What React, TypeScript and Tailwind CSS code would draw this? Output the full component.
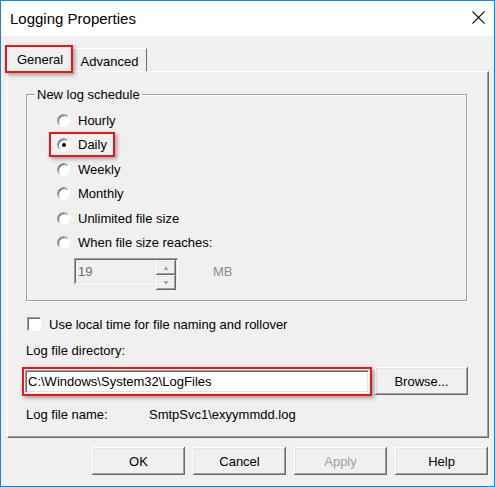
const raised =
  "shadow-[inset_-1px_-1px_#696969,inset_1px_1px_#ffffff,inset_-2px_-2px_#a0a0a0,inset_2px_2px_#e3e3e3]";
const sunken =
  "shadow-[inset_1px_1px_#a0a0a0,inset_-1px_-1px_#ffffff,inset_2px_2px_#696969,inset_-2px_-2px_#e3e3e3]";
const redBox = "pointer-events-none absolute border-2 border-[#ee1515] shadow-[2px_2px_4px_rgba(0,0,0,0.35)]";

function Radio({ label, checked }: { label: string; checked?: boolean }) {
  return (
    <div className="flex h-[24.5px] items-center">
      <div className="relative flex items-center gap-[8px]">
        <span className="flex h-[13px] w-[13px] items-center justify-center rounded-full border border-t-[#a0a0a0] border-l-[#a0a0a0] border-r-white border-b-white bg-white shadow-[inset_1px_1px_#696969]">
          {checked && <span className="h-[4px] w-[4px] rounded-full bg-black" />}
        </span>
        <span>{label}</span>
        {checked && <span className={`${redBox} -left-[8px] -top-[5px] -right-[8px] -bottom-[5px]`} />}
      </div>
    </div>
  );
}

function Button({ label, disabled, className = "" }: { label: string; disabled?: boolean; className?: string }) {
  return (
    <div
      className={`flex h-[28px] w-[93px] items-center justify-center bg-[#f0f0f0] ${raised} ${
        disabled ? "text-[#a0a0a0]" : ""
      } ${className}`}
    >
      {label}
    </div>
  );
}

export default function App() {
  return (
    <div className="flex h-[487px] w-[495px] flex-col border border-[#1883d7] bg-[#f0f0f0] font-['Liberation_Sans',Arial,sans-serif] text-[13px] leading-[15px] text-black">
      <div className="flex h-[35px] items-center bg-white pl-[9px] pr-[9px] text-[15px]">
        <span className="flex-1">Logging Properties</span>
        <svg width="13" height="13" viewBox="0 0 13 13" className="mt-[-2px]">
          <path d="M0.5 0.5 L12.5 12.5 M12.5 0.5 L0.5 12.5" stroke="#1a1a1a" strokeWidth="1.1" fill="none" />
        </svg>
      </div>

      <div className="relative z-10 mt-[10px] flex h-[26px] items-end pl-[6px]">
        <div className="relative flex h-[26px] w-[66px] items-center justify-center border-t border-l border-r border-t-white border-l-white border-r-[#696969] bg-[#f0f0f0] pb-[1px]">
          General
          <span className={`${redBox} -left-[3px] -top-[2px] -right-[1px] -bottom-[1px]`} />
        </div>
        <div className="mb-[1px] flex h-[23px] w-[74px] items-center justify-center border-t border-r border-t-white border-r-[#696969] pt-[2px]">
          Advanced
        </div>
      </div>

      <div className="-mt-[1px] ml-[6px] flex h-[367px] w-[482px] flex-col border border-t-white border-l-white border-r-[#696969] border-b-[#696969] shadow-[inset_-1px_-1px_#a0a0a0]">
        <div className="relative ml-[18px] mt-[22px] h-[207px] w-[441px] border border-[#a0a0a0] shadow-[inset_1px_1px_#ffffff,1px_1px_#ffffff]">
          <span className="absolute -top-[8px] left-[8px] bg-[#f0f0f0] px-[2px]">New log schedule</span>
          <div className="flex flex-col pl-[30px] pt-[13px]">
            <Radio label="Hourly" />
            <Radio label="Daily" checked />
            <Radio label="Weekly" />
            <Radio label="Monthly" />
            <Radio label="Unlimited file size" />
            <Radio label="When file size reaches:" />
            <div className="mt-[3px] flex items-center">
              <div className={`ml-[17px] flex h-[26px] w-[104px] items-stretch bg-[#f0f0f0] p-[2px] ${sunken}`}>
                <span className="flex flex-1 items-center pl-[2px] text-[13px] text-[#6d6d6d]">19</span>
                <div className="flex w-[20px] flex-col">
                  <span className={`flex flex-1 items-center justify-center text-[7px] text-[#a0a0a0] ${raised}`}>▲</span>
                  <span className={`flex flex-1 items-center justify-center text-[7px] text-[#a0a0a0] ${raised}`}>▼</span>
                </div>
              </div>
              <span className="ml-[35px] text-[13px] text-[#8c8c8c]">MB</span>
            </div>
          </div>
        </div>

        <div className="ml-[19px] mt-[16px] flex h-[14px] items-center gap-[8px]">
          <span className="h-[14px] w-[14px] border border-t-[#a0a0a0] border-l-[#a0a0a0] border-r-white border-b-white bg-white shadow-[inset_1px_1px_#696969]" />
          <span>Use local time for file naming and rollover</span>
        </div>

        <div className="ml-[18px] mt-[12px]">Log file directory:</div>

        <div className="ml-[17px] mt-[9px] flex h-[28px] items-center">
          <div className={`relative flex h-[23px] w-[344px] items-center bg-white pl-[3px] ${sunken}`}>
            C:\Windows\System32\LogFiles
            <span className={`${redBox} -left-[3px] -top-[3px] -right-[3px] -bottom-[3px]`} />
          </div>
          <Button label="Browse..." className="ml-[6px]" />
        </div>

        <div className="ml-[18px] mt-[12px] flex">
          <span className="w-[123px]">Log file name:</span>
          <span>SmtpSvc1\exyymmdd.log</span>
        </div>
      </div>

      <div className="ml-[91px] mt-[9px] flex gap-[8px]">
        <Button label="OK" />
        <Button label="Cancel" />
        <Button label="Apply" disabled />
        <Button label="Help" />
      </div>
    </div>
  );
}
